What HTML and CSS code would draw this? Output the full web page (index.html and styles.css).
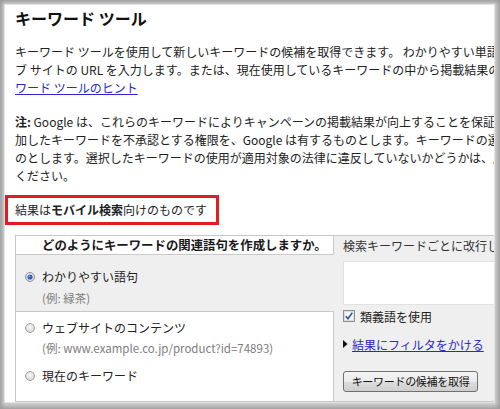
FILE: index.html
```html
<!DOCTYPE html>
<html lang="ja">
<head>
<meta charset="utf-8">
<title>キーワード ツール</title>
<link rel="stylesheet" href="styles.css">
</head>
<body>
<div class="frame">
  <div class="page">
    <h1 class="title">キーワード ツール</h1>
    <p class="para para1">
      <span class="line">キーワード ツールを使用して新しいキーワードの候補を取得できます。 わかりやすい単語やフレーズを入力するか、ウェ</span>
      <span class="line">ブ サイトの URL を入力します。または、現在使用しているキーワードの中から掲載結果の高いものを選択します。 <a class="link" href="#">キー</a></span>
      <span class="line"><a class="link" href="#">ワード ツールのヒント</a></span>
    </p>
    <p class="para para2">
      <span class="line"><b>注:</b> Google は、これらのキーワードによりキャンペーンの掲載結果が向上することを保証するものではありません。また、追</span>
      <span class="line">加したキーワードを不承認とする権限を、Google は有するものとします。キーワードの選択および使用は広告主様の責任で行うも</span>
      <span class="line">のとします。選択したキーワードの使用が適用対象の法律に違反していないかどうかは、広告主様ご自身で確認して</span>
      <span class="line">ください。</span>
    </p>
    <div class="notice">結果は<b>モバイル検索</b>向けのものです</div>

    <div class="panel">
      <div class="choices">
        <div class="qhead">どのようにキーワードの関連語句を作成しますか。</div>
        <div class="opt opt-selected">
          <svg class="radio" width="10" height="10" viewBox="0 0 10 10">
            <defs>
              <radialGradient id="rg1" cx="50%" cy="40%" r="60%">
                <stop offset="0" stop-color="#ffffff"/>
                <stop offset="1" stop-color="#d6d6d6"/>
              </radialGradient>
            </defs>
            <circle cx="5" cy="5" r="4.5" fill="url(#rg1)" stroke="#8f8f8f" stroke-width="1"/>
            <circle cx="5" cy="5" r="2.6" fill="#2f62b8"/>
            <circle cx="4.4" cy="4.3" r="0.9" fill="#7fb0ee"/>
          </svg>
          <div class="opt-text">
            <div class="opt-label">わかりやすい語句</div>
            <div class="opt-sub sub1">(例: 緑茶)</div>
          </div>
        </div>
        <div class="others">
          <div class="opt">
            <svg class="radio" width="10" height="10" viewBox="0 0 10 10">
              <defs>
                <radialGradient id="rg2" cx="50%" cy="40%" r="60%">
                  <stop offset="0" stop-color="#fafafa"/>
                  <stop offset="1" stop-color="#d2d2d2"/>
                </radialGradient>
              </defs>
              <circle cx="5" cy="5" r="4.5" fill="url(#rg2)" stroke="#a3a3a3" stroke-width="1"/>
            </svg>
            <div class="opt-text">
              <div class="opt-label">ウェブサイトのコンテンツ</div>
              <div class="opt-sub sub2">(例: www.example.co.jp/product?id=74893)</div>
            </div>
          </div>
          <div class="opt opt-last">
            <svg class="radio" width="10" height="10" viewBox="0 0 10 10">
              <circle cx="5" cy="5" r="4.5" fill="url(#rg2)" stroke="#a3a3a3" stroke-width="1"/>
            </svg>
            <div class="opt-text">
              <div class="opt-label">現在のキーワード</div>
            </div>
          </div>
        </div>
      </div>
      <div class="kw">
        <div class="kw-head">検索キーワードごとに改行して入力してください:</div>
        <textarea class="kw-input"></textarea>
        <div class="check-row">
          <svg class="check" width="12" height="12" viewBox="0 0 12 12">
            <rect x="0.5" y="0.5" width="11" height="11" fill="#f6f6f6" stroke="#8e8f8f"/>
            <rect x="1.5" y="1.5" width="9" height="9" fill="none" stroke="#dcdcdc"/>
            <path d="M2.8 6.2 L5 8.8 L9.3 2.6" fill="none" stroke="#2b4ea8" stroke-width="1.6"/>
          </svg>
          <span>類義語を使用</span>
        </div>
        <div class="filter-row">
          <svg class="tri" width="5" height="8" viewBox="0 0 5 8">
            <polygon points="0,0 4.5,4 0,8" fill="#111"/>
          </svg>
          <a class="link" href="#">結果にフィルタをかける</a>
        </div>
        <button class="btn" type="button">キーワードの候補を取得</button>
      </div>
    </div>
  </div>
</div>
</body>
</html>
```
FILE: styles.css
```css
* { box-sizing: border-box; }
html, body { margin: 0; padding: 0; }
body {
  width: 500px;
  height: 409px;
  overflow: hidden;
  font-family: "Noto Sans CJK JP", "Noto Sans", sans-serif;
  font-size: 12px;
  color: #222;
  background: #c4c4c4;
}
.frame {
  width: 500px;
  height: 409px;
  padding: 5px 6px 7px 5px;
  background: #cccccc;
  box-shadow: inset 0 0 4px 2px rgba(0, 0, 0, 0.25);
}
.page {
  height: 397px;
  background: #fff;
  overflow: hidden;
  padding: 3px 0 0 10px;
  box-shadow: 0 0 1px 1px #e2e2e2;
}
.title {
  margin: 0;
  font-size: 16px;
  line-height: 20px;
  font-weight: bold;
  color: #111;
}
.para {
  margin: 15px 0 0;
  line-height: 18px;
  white-space: nowrap;
}
.para2 { margin-top: 16px; }
.line { display: block; }
.link { color: #2a2acc; text-decoration: underline; }
.notice {
  width: fit-content;
  margin: 10px 0 0 -10px;
  border: 3px solid #e31c1c;
  padding: 0 9px 0 7px;
  line-height: 24px;
  white-space: nowrap;
}
.panel {
  margin-top: 10px;
  width: 640px;
  height: 167px;
  display: grid;
  grid-template-columns: 318px 1fr;
  border: 1px solid #c8c8c8;
  border-right: none;
  background: #efefef;
}
.choices {
  display: flex;
  flex-direction: column;
}
.qhead {
  height: 19px;
  line-height: 18px;
  background: #fff;
  border-right: 1px solid #c8c8c8;
  border-bottom: 1px solid #c8c8c8;
  padding-left: 26px;
  font-size: 12.4px;
  font-weight: bold;
  color: #1a1a1a;
  white-space: nowrap;
}
.opt {
  display: flex;
  gap: 7px;
  padding-left: 9px;
}
.opt-selected {
  height: 56px;
  padding-top: 13px;
}
.radio {
  flex: none;
  margin-top: 4px;
}
.opt-label {
  line-height: 18px;
  white-space: nowrap;
}
.opt-sub {
  line-height: 16px;
  font-size: 11.5px;
  color: #7d7d7d;
  white-space: nowrap;
}
.sub1 { margin-top: 4px; }
.sub2 { margin-top: 3px; }
.others {
  flex: 1;
  background: #fff;
  border-top: 1px solid #c8c8c8;
  border-right: 1px solid #c8c8c8;
  padding-top: 7px;
}
.opt-last { margin-top: 11px; }
.kw {
  padding: 1px 0 0 9px;
  display: flex;
  flex-direction: column;
  align-items: flex-start;
}
.kw-head {
  line-height: 18px;
  color: #333;
  white-space: nowrap;
}
.kw-input {
  display: block;
  margin: 6px 0 0;
  width: 300px;
  height: 44px;
  border: 1px solid #e2e2e2;
  background: #fff;
  resize: none;
  padding: 0;
}
.check-row {
  margin-top: 2px;
  height: 18px;
  display: flex;
  align-items: center;
  gap: 5px;
  white-space: nowrap;
}
.check { flex: none; }
.filter-row {
  margin-top: 10px;
  height: 18px;
  display: flex;
  align-items: center;
  gap: 4px;
  white-space: nowrap;
}
.tri { flex: none; }
.btn {
  margin-top: 18px;
  width: 135px;
  height: 21px;
  padding: 0;
  border: 1px solid #707070;
  border-radius: 3px;
  background: linear-gradient(#f4f4f4, #ebebeb 50%, #dddddd 51%, #cfcfcf);
  font-family: "Noto Sans CJK JP", sans-serif;
  font-size: 11px;
  letter-spacing: -0.3px;
  line-height: 19px;
  color: #111;
}
```
